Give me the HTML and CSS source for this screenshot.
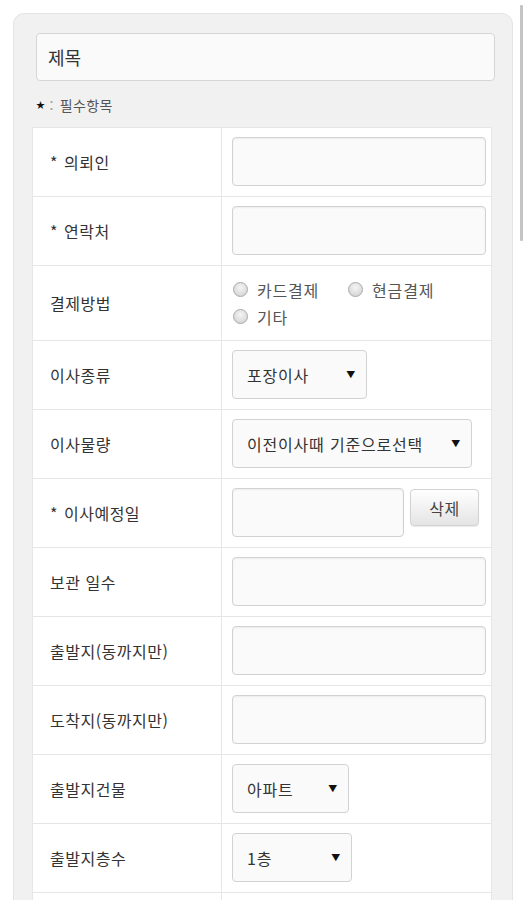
FILE: index.html
```html
<!DOCTYPE html>
<html lang="ko">
<head>
<meta charset="utf-8">
<title>이사 견적 신청</title>
<link rel="stylesheet" href="styles.css">
</head>
<body>
<div class="scrollbar"></div>
<div class="panel">
  <div class="title-box">제목</div>
  <div class="note"><span class="star">★</span><span class="colon">:</span>필수항목</div>
  <div class="table">
    <div class="row">
      <div class="label"><span class="req">*</span>의뢰인</div>
      <div class="cell"><div class="input"></div></div>
    </div>
    <div class="row">
      <div class="label"><span class="req">*</span>연락처</div>
      <div class="cell"><div class="input"></div></div>
    </div>
    <div class="row row-radio">
      <div class="label">결제방법</div>
      <div class="cell radios">
        <label class="radio"><span class="dot"></span>카드결제</label>
        <label class="radio"><span class="dot"></span>현금결제</label>
        <label class="radio"><span class="dot"></span>기타</label>
      </div>
    </div>
    <div class="row">
      <div class="label">이사종류</div>
      <div class="cell"><div class="select w135"><span>포장이사</span><span class="arrow">▼</span></div></div>
    </div>
    <div class="row">
      <div class="label">이사물량</div>
      <div class="cell"><div class="select w240"><span>이전이사때 기준으로선택</span><span class="arrow">▼</span></div></div>
    </div>
    <div class="row">
      <div class="label"><span class="req">*</span>이사예정일</div>
      <div class="cell date"><div class="input short"></div><button class="btn">삭제</button></div>
    </div>
    <div class="row">
      <div class="label">보관 일수</div>
      <div class="cell"><div class="input"></div></div>
    </div>
    <div class="row">
      <div class="label">출발지(동까지만)</div>
      <div class="cell"><div class="input"></div></div>
    </div>
    <div class="row">
      <div class="label">도착지(동까지만)</div>
      <div class="cell"><div class="input"></div></div>
    </div>
    <div class="row">
      <div class="label">출발지건물</div>
      <div class="cell"><div class="select w117"><span>아파트</span><span class="arrow">▼</span></div></div>
    </div>
    <div class="row">
      <div class="label">출발지층수</div>
      <div class="cell"><div class="select w120"><span>1층</span><span class="arrow">▼</span></div></div>
    </div>
    <div class="row">
      <div class="label">도착지건물</div>
      <div class="cell"><div class="select w117"><span>아파트</span><span class="arrow">▼</span></div></div>
    </div>
  </div>
</div>
</body>
</html>
```
FILE: styles.css
```css
html, body {
  margin: 0;
  padding: 0;
  height: 900px;
  overflow: hidden;
  background: #ffffff;
}
body {
  font-family: "Noto Sans CJK KR", "Noto Sans", sans-serif;
  color: #333;
  position: relative;
}
.scrollbar {
  position: absolute;
  left: 520px;
  top: 5px;
  width: 3px;
  height: 236px;
  background: #c4c4c4;
  border-radius: 1px;
}
.panel {
  margin: 13px 0 0 13px;
  width: 500px;
  height: 1000px;
  background: #f1f1f1;
  border: 1px solid #e4e4e4;
  border-radius: 11px;
  padding: 19px 0 0 0;
  box-sizing: border-box;
}
.title-box {
  margin-left: 22px;
  width: 459px;
  height: 48px;
  box-sizing: border-box;
  border: 1px solid #d6d6d6;
  border-radius: 4px;
  background: #fafafa;
  font-size: 18px;
  line-height: 46px;
  padding-left: 11px;
  color: #333;
}
.note {
  margin: 14px 0 0 22px;
  height: 20px;
  line-height: 20px;
  font-size: 14px;
  letter-spacing: 0.4px;
  color: #555;
  display: flex;
  align-items: center;
}
.star {
  font-size: 9px;
  color: #111;
  margin-right: 4px;
}
.colon {
  color: #999;
  margin-right: 6px;
}
.table {
  margin: 12px 0 0 18px;
  width: 460px;
  background: #fff;
  border: 1px solid #e6e6e6;
  box-sizing: border-box;
}
.row {
  display: grid;
  grid-template-columns: 189px 1fr;
  border-bottom: 1px solid #e6e6e6;
}
.label {
  border-right: 1px solid #e6e6e6;
  display: flex;
  align-items: center;
  padding-left: 17px;
  font-size: 16px;
  letter-spacing: 0.5px;
  color: #333;
}
.req {
  margin-right: 6px;
}
.cell {
  padding: 9px 5px 10px 10px;
  display: flex;
  align-items: center;
}
.input {
  width: 100%;
  height: 49px;
  box-sizing: border-box;
  border: 1px solid #d2d2d2;
  border-radius: 4px;
  background: #fafafa;
  box-shadow: inset 0 1px 2px rgba(0,0,0,0.06);
}
.input.short {
  width: 172px;
}
.date {
  align-items: flex-start;
  gap: 6px;
}
.btn {
  width: 69px;
  height: 37px;
  box-sizing: border-box;
  border: 1px solid #d2d2d2;
  border-radius: 4px;
  background: linear-gradient(#ffffff, #e4e4e4);
  font-family: "Noto Sans CJK KR", sans-serif;
  font-size: 16px;
  letter-spacing: 0.5px;
  color: #444;
  padding: 0;
  margin-top: 1px;
  box-shadow: 0 1px 1px rgba(0,0,0,0.08);
}
.select {
  height: 49px;
  box-sizing: border-box;
  border: 1px solid #d2d2d2;
  border-radius: 4px;
  background: #fafafa;
  display: flex;
  align-items: center;
  justify-content: space-between;
  padding: 0 10px 0 14px;
  font-size: 16px;
  letter-spacing: 0.8px;
  color: #333;
}
.w135 { width: 135px; }
.w240 { width: 240px; }
.w117 { width: 117px; }
.w120 { width: 120px; }
.arrow {
  font-size: 9px;
  color: #111;
}
.row-radio .cell {
  padding-top: 10px;
  padding-bottom: 10px;
}
.radios {
  flex-wrap: wrap;
  align-content: flex-start;
  font-size: 16px;
  letter-spacing: 0.8px;
  color: #555;
}
.radio {
  display: flex;
  align-items: center;
  height: 27px;
  margin-right: 28px;
}
.dot {
  width: 15px;
  height: 15px;
  box-sizing: border-box;
  border-radius: 50%;
  border: 1px solid #a9a9a9;
  background: radial-gradient(circle at 50% 35%, #f4f4f4, #cfcfcf);
  margin: 0 9px 0 1px;
}
```
